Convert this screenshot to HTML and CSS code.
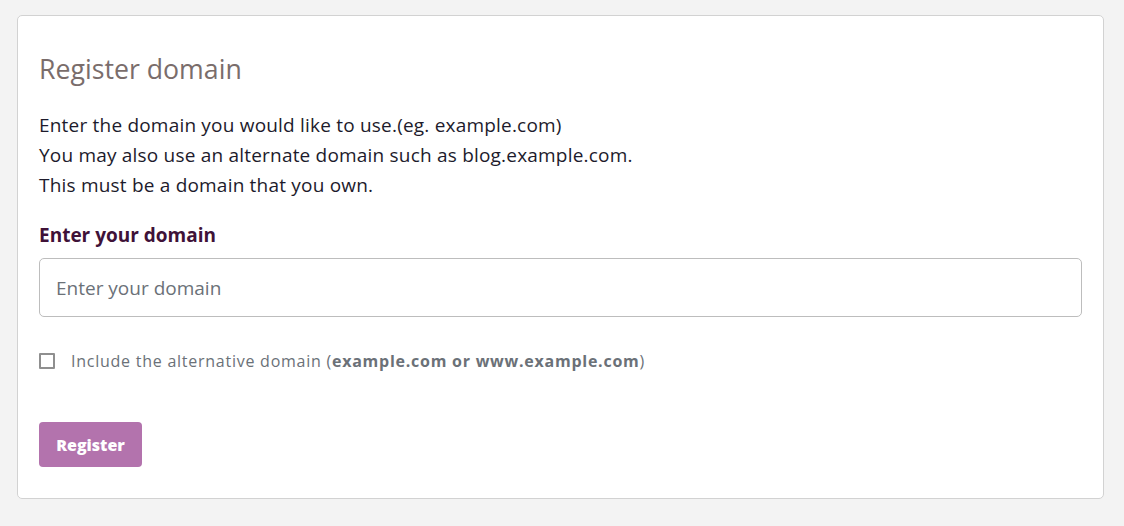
FILE: index.html
```html
<!DOCTYPE html>
<html lang="en">
<head>
<meta charset="utf-8">
<title>Register domain</title>
<link rel="stylesheet" href="styles.css">
</head>
<body>
<div class="card">
  <h2 class="title">Register domain</h2>
  <div class="intro">
    <p>Enter the domain you would like to use.(eg. example.com)</p>
    <p>You may also use an alternate domain such as blog.example.com.</p>
    <p>This must be a domain that you own.</p>
  </div>
  <label class="label" for="domain">Enter your domain</label>
  <input class="input" id="domain" type="text" placeholder="Enter your domain">
  <label class="check">
    <span class="box"></span>
    <span class="check-text">Include the alternative domain (<b>example.com or www.example.com</b>)</span>
  </label>
  <button class="btn" type="button">Register</button>
</div>
</body>
</html>
```
FILE: styles.css
```css
html, body {
  margin: 0;
  padding: 0;
}
body {
  background: #f3f3f3;
  font-family: "Open Sans", Lato, sans-serif;
  padding: 15px 20px 27px 17px;
  height: 526px;
  box-sizing: border-box;
}
.card {
  background: #fff;
  border: 1px solid #d2d2d2;
  border-radius: 5px;
  height: 484px;
  box-sizing: border-box;
  padding: 36px 21px 0 21px;
  display: flex;
  flex-direction: column;
  align-items: flex-start;
}
.title {
  margin: 0;
  font-size: 26.7px;
  font-weight: 400;
  color: #7a6d6b;
  line-height: 34px;
}
.intro {
  margin-top: 24px;
  font-size: 19px;
  letter-spacing: 0.2px;
  line-height: 30px;
  color: #1d1b2c;
}
.intro p {
  margin: 0;
}
.label {
  margin-top: 22px;
  font-size: 19px;
  font-weight: 700;
  color: #3f1238;
  line-height: 26px;
}
.input {
  margin-top: 10px;
  width: 100%;
  height: 59px;
  box-sizing: border-box;
  border: 1px solid #bdbdbd;
  border-radius: 5px;
  padding: 0 16px;
  font-family: inherit;
  font-size: 19px;
  color: #333;
  outline: none;
}
.input::placeholder {
  color: #6b7178;
}
.check {
  margin-top: 33px;
  display: flex;
  align-items: center;
  gap: 16px;
  font-size: 16px;
  color: #6b7178;
  line-height: 22px;
}
.box {
  width: 16px;
  height: 16px;
  border: 2px solid #8f8f8f;
  box-sizing: border-box;
  border-radius: 1px;
}
.check-text {
  letter-spacing: 0.75px;
}
.check-text b {
  font-weight: 700;
}
.btn {
  margin-top: 50px;
  width: 103px;
  height: 45px;
  background: #b373ad;
  border: none;
  border-radius: 4px;
  color: #fff;
  font-family: inherit;
  font-size: 16px;
  font-weight: 800;
  padding: 0;
}
```
